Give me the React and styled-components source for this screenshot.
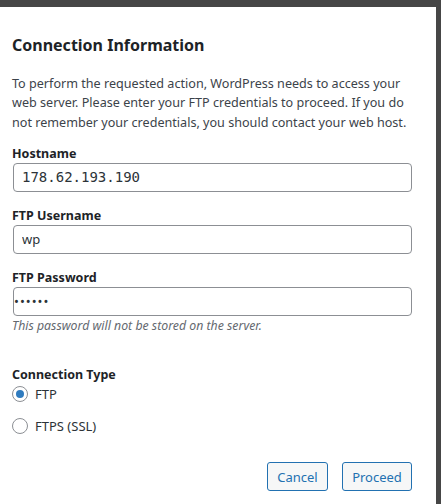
import React, { useState } from "react";
import styled, { createGlobalStyle } from "styled-components";

const GlobalStyle = createGlobalStyle`
  html, body {
    margin: 0;
    padding: 0;
    background: #464646;
    height: 100%;
    overflow: hidden;
  }
  body {
    font-family: "Noto Sans", "Open Sans", sans-serif;
  }
`;

const Page = styled.div`
  display: flex;
  height: 504px;
  padding-top: 7px;
  box-sizing: border-box;
`;

const Modal = styled.form`
  width: 436px;
  height: 100%;
  background: #ffffff;
  box-sizing: border-box;
  padding: 0 24px 0 12px;
  display: flex;
  flex-direction: column;
  color: #3c434a;
`;

const Title = styled.h2`
  margin: 26px 0 0;
  font-size: 16px;
  line-height: 24px;
  font-weight: 700;
  color: #1d2327;
`;

const Intro = styled.p`
  margin: 17px 0 0;
  font-size: 12.6px;
  line-height: 19.3px;
  color: #3c434a;
`;

const Field = styled.div`
  display: flex;
  flex-direction: column;
  margin-top: ${({ $top }) => $top}px;
`;

const Label = styled.label`
  font-size: 12.5px;
  font-weight: 700;
  line-height: 18px;
  color: #1d2327;
`;

const Input = styled.input`
  margin: 0 0 0 1px;
  width: 399px;
  height: 29px;
  box-sizing: border-box;
  border: 1px solid #8c8f94;
  border-radius: 4px;
  padding: 0 0 0 ${({ $pad }) => $pad}px;
  font-family: ${({ $mono }) =>
    $mono ? '"DejaVu Sans Mono", monospace' : '"Noto Sans", sans-serif'};
  font-size: ${({ $mono }) => ($mono ? "14px" : "13px")};
  letter-spacing: ${({ $spacing }) => $spacing || 0}px;
  color: #2c3338;
  background: #fff;
  outline: none;
`;

const Hint = styled.span`
  margin-top: 1px;
  font-size: 12.3px;
  line-height: 17px;
  font-style: italic;
  color: #646970;
`;

const Fieldset = styled.fieldset`
  border: none;
  margin: 32px 0 0;
  padding: 0;
  display: flex;
  flex-direction: column;
`;

const Legend = styled.div`
  font-size: 12.5px;
  font-weight: 700;
  line-height: 18px;
  color: #1d2327;
`;

const RadioRow = styled.label`
  display: flex;
  align-items: center;
  gap: 7px;
  height: 20px;
  margin-top: ${({ $top }) => $top}px;
  font-size: 13px;
  color: #2c3338;
  cursor: pointer;
`;

const Radio = styled.span`
  width: 16px;
  height: 16px;
  box-sizing: border-box;
  border: 1px solid #8c8f94;
  border-radius: 50%;
  display: flex;
  align-items: center;
  justify-content: center;
  &::after {
    content: "";
    width: 8px;
    height: 8px;
    border-radius: 50%;
    background: ${({ $checked }) => ($checked ? "#2f7bbf" : "transparent")};
  }
`;

const Actions = styled.div`
  margin-top: auto;
  margin-bottom: 13px;
  display: flex;
  justify-content: flex-end;
  gap: 14px;
`;

const Button = styled.button`
  width: ${({ $w }) => $w}px;
  height: 29px;
  padding: 0;
  box-sizing: border-box;
  border: 1px solid #2271b1;
  border-radius: 3px;
  background: #f6f7f7;
  color: #2271b1;
  font-family: "Noto Sans", sans-serif;
  font-size: 13px;
  cursor: pointer;
`;

export default function App() {
  const [type, setType] = useState("ftp");

  return (
    <>
      <GlobalStyle />
      <Page>
        <Modal onSubmit={(e) => e.preventDefault()}>
          <Title>Connection Information</Title>
          <Intro>
            To perform the requested action, WordPress needs to access your web
            server. Please enter your FTP credentials to proceed. If you do not
            remember your credentials, you should contact your web host.
          </Intro>

          <Field $top={13}>
            <Label>Hostname</Label>
            <Input $mono $pad={8} defaultValue="178.62.193.190" />
          </Field>
          <Field $top={15}>
            <Label>FTP Username</Label>
            <Input $pad={8} defaultValue="wp" />
          </Field>
          <Field $top={15}>
            <Label>FTP Password</Label>
            <Input
              $pad={0}
              $spacing={1}
              type="password"
              defaultValue="secret"
            />
            <Hint>This password will not be stored on the server.</Hint>
          </Field>

          <Fieldset>
            <Legend>Connection Type</Legend>
            <RadioRow $top={0} onClick={() => setType("ftp")}>
              <Radio $checked={type === "ftp"} />
              FTP
            </RadioRow>
            <RadioRow $top={12} onClick={() => setType("ftps")}>
              <Radio $checked={type === "ftps"} />
              FTPS (SSL)
            </RadioRow>
          </Fieldset>

          <Actions>
            <Button type="button" $w={61}>
              Cancel
            </Button>
            <Button type="submit" $w={70}>
              Proceed
            </Button>
          </Actions>
        </Modal>
      </Page>
    </>
  );
}
